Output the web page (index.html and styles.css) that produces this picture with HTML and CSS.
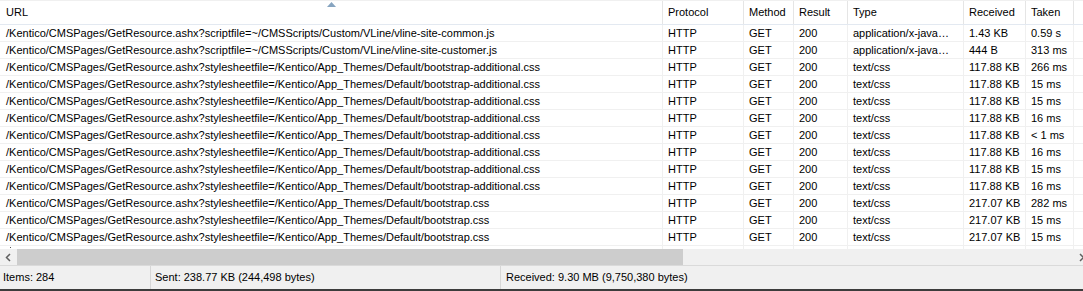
FILE: index.html
```html
<!DOCTYPE html>
<html lang="en">

<head>
    <meta charset="UTF-8">
    <title>Sessions</title>
    <link rel="stylesheet" href="styles.css">
</head>

<body>

<div class="window">

    <!-- Lista de sesiones -->
    <div class="list">
        <div class="list-header">
            <div class="hcell col-url">URL
                <svg class="sort-arrow" width="9" height="5" viewBox="0 0 9 5"><polygon points="0,5 4.5,0 9,5" fill="#86a4c0"/></svg>
            </div>
            <div class="hcell">Protocol</div>
            <div class="hcell">Method</div>
            <div class="hcell">Result</div>
            <div class="hcell">Type</div>
            <div class="hcell">Received</div>
            <div class="hcell">Taken</div>
            <div class="hcell filler"></div>
        </div>

        <div class="list-body" id="rows"></div>
        <!-- fila parcial bajo el borde -->
        <div class="row row-partial">
            <div class="cell"><span class="dot"></span></div>
            <div class="cell"></div>
            <div class="cell"></div>
            <div class="cell"></div>
            <div class="cell"></div>
            <div class="cell"></div>
            <div class="cell"></div>
            <div class="cell filler"></div>
        </div>
    </div>

    <!-- Barra horizontal -->
    <div class="hscroll">
        <div class="scroll-btn">
            <svg width="7" height="9" viewBox="0 0 7 9"><polyline points="5,1 1.5,4.5 5,8" fill="none" stroke="#606060" stroke-width="1.5"/></svg>
        </div>
        <div class="track">
            <div class="thumb"></div>
        </div>
        <div class="scroll-btn">
            <svg width="7" height="9" viewBox="0 0 7 9"><polyline points="2,1 5.5,4.5 2,8" fill="none" stroke="#606060" stroke-width="1.5"/></svg>
        </div>
    </div>

    <!-- Barra de estado -->
    <div class="statusbar">
        <div class="panel panel-items">Items: 284</div>
        <div class="panel panel-sent">Sent: 238.77 KB (244,498 bytes)</div>
        <div class="panel panel-received">Received: 9.30 MB (9,750,380 bytes)</div>
    </div>
</div>

<script>
    const base = '/Kentico/CMSPages/GetResource.ashx?';
    const extra = base + 'stylesheetfile=/Kentico/App_Themes/Default/bootstrap-additional.css';
    const boot = base + 'stylesheetfile=/Kentico/App_Themes/Default/bootstrap.css';
    const js = 'application/x-javascript';

    const sesiones = [
        [base + 'scriptfile=~/CMSScripts/Custom/VLine/vline-site-common.js', js, '1.43 KB', '0.59 s'],
        [base + 'scriptfile=~/CMSScripts/Custom/VLine/vline-site-customer.js', js, '444 B', '313 ms'],
        [extra, 'text/css', '117.88 KB', '266 ms'],
        [extra, 'text/css', '117.88 KB', '15 ms'],
        [extra, 'text/css', '117.88 KB', '15 ms'],
        [extra, 'text/css', '117.88 KB', '16 ms'],
        [extra, 'text/css', '117.88 KB', '< 1 ms'],
        [extra, 'text/css', '117.88 KB', '16 ms'],
        [extra, 'text/css', '117.88 KB', '15 ms'],
        [extra, 'text/css', '117.88 KB', '16 ms'],
        [boot, 'text/css', '217.07 KB', '282 ms'],
        [boot, 'text/css', '217.07 KB', '15 ms'],
        [boot, 'text/css', '217.07 KB', '15 ms']
    ];

    const container = document.getElementById('rows');
    sesiones.forEach(s => {
        const row = document.createElement('div');
        row.className = 'row';
        const celdas = [s[0], 'HTTP', 'GET', '200', s[1], s[2], s[3], ''];
        const clases = ['', '', '', '', ' col-type', '', '', ' filler'];
        celdas.forEach((texto, i) => {
            const cell = document.createElement('div');
            cell.className = 'cell' + clases[i];
            cell.textContent = texto;
            row.appendChild(cell);
        });
        container.appendChild(row);
    });
</script>

</body>

</html>
```

FILE: styles.css
```css
* {
    box-sizing: border-box;
    font-family: 'Liberation Sans', Arial, sans-serif;
}

body {
    margin: 0;
    padding: 0;
    background-color: #ffffff;
    overflow: hidden;
}

.window {
    width: 1083px;
    height: 291px;
    display: flex;
    flex-direction: column;
    overflow: hidden;
    font-size: 11px;
    color: #000000;
}

/* LISTA */
.list {
    height: 250px;
    overflow: hidden;
    background-color: #ffffff;
}

.list-header,
.row {
    display: grid;
    grid-template-columns: 663px 81px 50px 54px 116px 62px 48px 40px;
}

.list-header {
    height: 25px;
    border-top: 1px solid #f0f0f0;
    border-bottom: 1px solid #e3e9f1;
}

.hcell {
    position: relative;
    line-height: 23px;
    padding: 0 5px;
    border-right: 1px solid #e5e5e5;
    white-space: nowrap;
}

.hcell.col-url {
    padding-left: 6px;
}

.sort-arrow {
    position: absolute;
    top: 1px;
    left: 327px;
}

.row {
    height: 17px;
    border-bottom: 1px solid #f0f0f0;
}

.cell {
    line-height: 16px;
    padding: 0 1px 0 5px;
    border-right: 1px solid #f0f0f0;
    white-space: nowrap;
    overflow: hidden;
    text-overflow: ellipsis;
}

.cell:first-child {
    padding-left: 6px;
}

.cell.col-type {
    padding-right: 9px;
}

.filler {
    border-right: none;
}

.row-partial {
    border-bottom: none;
}

.dot {
    display: inline-block;
    width: 1px;
    height: 1px;
    margin: 1px 0 0 4px;
    vertical-align: top;
    background-color: #555555;
}

/* SCROLL HORIZONTAL */
.hscroll {
    height: 16px;
    width: 1090px;
    display: flex;
    background-color: #f0f0f0;
}

.scroll-btn {
    width: 17px;
    display: flex;
    align-items: center;
    justify-content: center;
}

.track {
    flex: 1;
    padding-right: 390px;
}

.thumb {
    height: 16px;
    background-color: #cdcdcd;
}

/* ESTADO */
.statusbar {
    flex: 1;
    display: flex;
    background-color: #f0f0f0;
    border-top: 1px solid #dadada;
    border-bottom: 2px solid #3c3c3c;
}

.panel {
    line-height: 23px;
    padding-left: 3px;
    white-space: nowrap;
}

.panel-items {
    width: 151px;
    border-right: 1px solid #d7d7d7;
}

.panel-sent {
    width: 350px;
    padding-left: 4px;
    border-right: 1px solid #d7d7d7;
}

.panel-received {
    flex: 1;
    padding-left: 5px;
}
```
